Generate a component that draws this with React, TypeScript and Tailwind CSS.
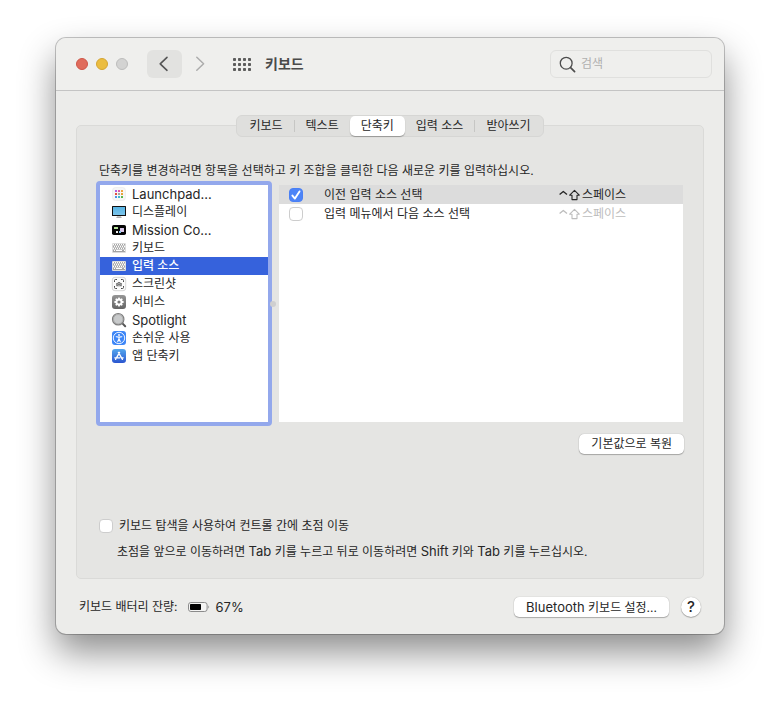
import { useState } from "react";
import type { ReactNode } from "react";

const KOREAN = "font-['Inter','Noto_Sans_CJK_KR',sans-serif]";

function LaunchpadIcon() {
  const colors = ["#b05be0", "#e0569c", "#f0a23c", "#e04a3c", "#9aa4ae", "#e5a037", "#4a8fe8", "#39b9c8", "#58b548"];
  return (
    <svg width="16" height="16" viewBox="0 0 16 16" aria-hidden="true">
      <rect x="1.5" y="1.5" width="13" height="13" rx="3" fill="#f6f6f6" stroke="#e9e9e9" strokeWidth=".6" />
      {colors.map((c, i) => (
        <rect key={c} x={4 + (i % 3) * 3} y={4 + Math.floor(i / 3) * 3} width="2" height="2" rx=".3" fill={c} />
      ))}
    </svg>
  );
}

function DisplayIcon() {
  return (
    <svg width="16" height="16" viewBox="0 0 16 16" aria-hidden="true">
      <defs>
        <linearGradient id="screen" x1="0" y1="0" x2="0" y2="1">
          <stop offset="0" stopColor="#58b4e4" />
          <stop offset="1" stopColor="#7cc4ea" />
        </linearGradient>
      </defs>
      <path d="M6 12h4l.5 2h-5z" fill="#c9c9c9" />
      <rect x="5.5" y="13.2" width="5" height=".8" fill="#a9a9a9" />
      <rect x="1" y="2" width="14" height="10" rx=".5" fill="#111" />
      <rect x="2" y="3" width="12" height="8" fill="url(#screen)" />
    </svg>
  );
}

function MissionIcon() {
  return (
    <svg width="16" height="16" viewBox="0 0 16 16" aria-hidden="true">
      <rect x="1" y="3" width="14" height="10" rx="1.8" fill="#050505" />
      <rect x="3" y="5" width="4" height="2" rx=".3" fill="#b7e39a" />
      <rect x="9" y="6" width="4" height="4" rx=".3" fill="#d8c8ea" />
      <rect x="5" y="9" width="2" height="2" rx=".3" fill="#f0f0f0" />
      <rect x="8" y="9" width="2" height="2" rx=".3" fill="#8fc7ee" />
    </svg>
  );
}

function KeyboardIcon() {
  const keys: ReactNode[] = [];
  for (let r = 0; r < 4; r++) {
    for (let c = 0; c < 6; c++) {
      if (r === 3 && c > 0 && c < 5) continue;
      keys.push(<rect key={`${r}-${c}`} x={2 + c * 2 + (r % 2)} y={4 + r * 2} width="1" height="1" fill="#fff" />);
    }
  }
  return (
    <svg width="16" height="16" viewBox="0 0 16 16" aria-hidden="true">
      <rect x="1" y="3" width="14" height="10" rx="1" fill="#dcdcdc" />
      <rect x="2" y="4" width="12" height="8" fill="#a4a4a4" />
      {keys}
      <rect x="5" y="10" width="6" height="1" fill="#fff" />
      <path d="M2 5.5h12M2 7.5h12M2 9.5h12" stroke="#c9c9c9" strokeWidth="1" />
    </svg>
  );
}

function ScreenshotIcon() {
  return (
    <svg width="16" height="16" viewBox="0 0 16 16" aria-hidden="true">
      <rect x="1.3" y="1.3" width="13.4" height="13.4" rx="2.6" fill="#fbfbfb" stroke="#c6c6c6" strokeWidth=".7" />
      <path d="M3.5 6V4.5a1 1 0 0 1 1-1H6M10 3.5h1.5a1 1 0 0 1 1 1V6M12.5 10v1.5a1 1 0 0 1-1 1H10M6 12.5H4.5a1 1 0 0 1-1-1V10" fill="none" stroke="#4a4a4a" strokeWidth="1" />
      <path d="M5.2 6.9h1.3l.6-.9h1.8l.6.9h1.3v3.4H5.2z" fill="#777" />
      <circle cx="8" cy="8.5" r="1.1" fill="#555" stroke="#d6d6d6" strokeWidth=".6" />
    </svg>
  );
}

function ServicesIcon() {
  return (
    <svg width="16" height="16" viewBox="0 0 16 16" aria-hidden="true">
      <defs>
        <linearGradient id="gear" x1="0" y1="0" x2="0" y2="1">
          <stop offset="0" stopColor="#969696" />
          <stop offset="1" stopColor="#646464" />
        </linearGradient>
      </defs>
      <rect x="1" y="1" width="14" height="14" rx="3" fill="url(#gear)" />
      {[0, 45, 90, 135].map((a) => (
        <rect key={a} x="7.1" y="3.4" width="1.8" height="9.2" rx=".5" fill="#fff" transform={`rotate(${a} 8 8)`} />
      ))}
      <circle cx="8" cy="8" r="3.5" fill="#fff" />
      <circle cx="8" cy="8" r="1.6" fill="#777" />
    </svg>
  );
}

function SpotlightIcon() {
  return (
    <svg width="16" height="16" viewBox="0 0 16 16" aria-hidden="true">
      <path d="m11.4 11.4 2.8 2.8" stroke="#555" strokeWidth="2" strokeLinecap="round" />
      <circle cx="7.2" cy="7.2" r="5.7" fill="#c8cacb" stroke="#7d7d7d" strokeWidth="1.2" />
      <circle cx="7.2" cy="7.2" r="4.7" fill="none" stroke="#a2a2a2" strokeWidth=".7" />
    </svg>
  );
}

function AccessibilityIcon() {
  return (
    <svg width="16" height="16" viewBox="0 0 16 16" aria-hidden="true">
      <rect x="1" y="1" width="14" height="14" rx="3" fill="#3d86f7" />
      <circle cx="8" cy="8" r="5.7" fill="none" stroke="#fff" strokeWidth=".9" />
      <circle cx="8" cy="5" r=".9" fill="#fff" />
      <path d="M5.2 6.7 8 7.1l2.8-.4M8 7.1v1.8M8 8.8l-1.3 3M8 8.8l1.3 3" fill="none" stroke="#fff" strokeWidth="1.1" strokeLinecap="round" strokeLinejoin="round" />
    </svg>
  );
}

function AppStoreIcon() {
  return (
    <svg width="16" height="16" viewBox="0 0 16 16" aria-hidden="true">
      <defs>
        <linearGradient id="store" x1="0" y1="0" x2="0" y2="1">
          <stop offset="0" stopColor="#53a7ee" />
          <stop offset="1" stopColor="#2b55cf" />
        </linearGradient>
      </defs>
      <rect x="1" y="1" width="14" height="14" rx="3" fill="url(#store)" />
      <g stroke="#fff" strokeWidth="1.3" strokeLinecap="round">
        <path d="M8.6 4.4 5.6 9.6M7.4 4.4l4 7M3.8 9.8h5M10.8 9.8h1.4M4.6 11.4l.3-.5" />
      </g>
    </svg>
  );
}

type Category = { label: string; icon: ReactNode; latin?: boolean };

const categories: Category[] = [
  { label: "Launchpad...", icon: <LaunchpadIcon />, latin: true },
  { label: "디스플레이", icon: <DisplayIcon /> },
  { label: "Mission Co...", icon: <MissionIcon />, latin: true },
  { label: "키보드", icon: <KeyboardIcon /> },
  { label: "입력 소스", icon: <KeyboardIcon /> },
  { label: "스크린샷", icon: <ScreenshotIcon /> },
  { label: "서비스", icon: <ServicesIcon /> },
  { label: "Spotlight", icon: <SpotlightIcon />, latin: true },
  { label: "손쉬운 사용", icon: <AccessibilityIcon /> },
  { label: "앱 단축키", icon: <AppStoreIcon /> },
];

const tabs = ["키보드", "텍스트", "단축키", "입력 소스", "받아쓰기"];

function Toolbar() {
  return (
    <header className="flex h-[53px] items-center border-b border-[#c4c4c4] bg-[#efefed] pr-3 pl-5">
      <div className="flex gap-2">
        <button aria-label="닫기" className="size-3 rounded-full border border-[#cf5648] bg-[#e06c5c]" />
        <button aria-label="최소화" className="size-3 rounded-full border border-[#d5a532] bg-[#ebbd40]" />
        <button aria-label="확대" className="size-3 rounded-full border border-[#bdbdbc] bg-[#d3d3d2]" />
      </div>
      <button aria-label="뒤로" className="ml-[19px] flex h-7 w-[35px] items-center justify-center rounded-md bg-[#e2e2e0]">
        <svg width="12" height="16" viewBox="0 0 12 16" fill="none" stroke="#555" strokeWidth="1.6" strokeLinecap="round" strokeLinejoin="round" aria-hidden="true">
          <path d="M8 1.3 1.2 7.8 8 14.3" />
        </svg>
      </button>
      <button aria-label="앞으로" className="ml-[13px] flex h-7 w-[10px] items-center justify-center">
        <svg width="10" height="16" viewBox="0 0 10 16" fill="none" stroke="#acacac" strokeWidth="1.5" strokeLinecap="round" strokeLinejoin="round" aria-hidden="true">
          <path d="m1.8 1.3 6.8 6.5-6.8 6.5" />
        </svg>
      </button>
      <button aria-label="모두 보기" className="ml-[28px]">
        <svg width="18" height="13" viewBox="0 0 18 13" fill="#5c5c5c" aria-hidden="true">
          {[0, 5, 10].map((y) => [0, 5, 10, 15].map((x) => <rect key={`${x}-${y}`} x={x} y={y} width="3" height="3" rx=".8" />))}
        </svg>
      </button>
      <h1 className="ml-[14px] text-[14px] leading-5 font-bold text-[#4a4a4a]">키보드</h1>
      <label className="ml-auto flex h-7 w-[162px] items-center gap-[5px] rounded-md border border-[#e0e0de] pl-2">
        <svg className="shrink-0" width="17" height="17" viewBox="0 0 17 17" fill="none" stroke="#4d4d4d" strokeLinecap="round" aria-hidden="true">
          <circle cx="7.2" cy="7.2" r="5.9" strokeWidth="1.3" />
          <path d="m11.6 11.6 4 4" strokeWidth="1.7" />
        </svg>
        <input aria-label="검색" placeholder="검색" className="w-full min-w-0 bg-transparent text-[12px] leading-4 outline-none placeholder:text-[#b0b0af]" />
      </label>
    </header>
  );
}

function Tabs() {
  return (
    <div role="tablist" className="relative z-10 mx-auto flex h-[22px] w-fit items-center rounded-md border border-[#d6d6d4] bg-[#dfdfdd] px-px">
      {tabs.map((t, i) => {
        const active = t === "단축키";
        const divider = i === 1 || i === 4;
        return (
          <div key={t} className="flex items-center">
            <span className={divider ? "h-3 w-px bg-[#c6c6c4]" : "w-0"} />
            <button
              role="tab"
              aria-selected={active}
              className={
                active
                  ? "h-5 rounded-[5px] bg-white px-[11px] leading-4 shadow-[0_1px_1px_rgba(0,0,0,0.3)]"
                  : "h-5 px-[11px] leading-4"
              }
            >
              {t}
            </button>
          </div>
        );
      })}
    </div>
  );
}

function Tick({ id, checked, onChange }: { id: string; checked: boolean; onChange: () => void }) {
  return (
    <span className="grid size-[14px] shrink-0">
      <input
        id={id}
        type="checkbox"
        checked={checked}
        onChange={onChange}
        className="col-start-1 row-start-1 size-[14px] appearance-none rounded-[4px] border border-[#cdcdcd] bg-white checked:border-[#4a80f5] checked:bg-[#4d84f7]"
      />
      {checked && (
        <svg className="pointer-events-none col-start-1 row-start-1" width="14" height="14" viewBox="0 0 14 14" fill="none" stroke="#fff" strokeWidth="1.9" strokeLinecap="round" strokeLinejoin="round" aria-hidden="true">
          <path d="m3.4 7.6 2.5 3 4.6-7.2" />
        </svg>
      )}
    </span>
  );
}

function Shortcut() {
  return (
    <span className="flex items-center gap-px">
      <svg width="22" height="14" viewBox="0 0 22 14" fill="none" stroke="currentColor" strokeLinejoin="round" role="img" aria-label="Control Shift">
        <path d="M.6 6.6 4.3 3.4 8 6.6" strokeWidth="1.3" />
        <path d="m15.5 2.4 4.8 4.8h-2.3v4.4h-5V7.2h-2.3z" strokeWidth="1.1" />
      </svg>
      <span>스페이스</span>
    </span>
  );
}

function Latin({ children }: { children: ReactNode }) {
  return <span className="text-[13px]">{children}</span>;
}

const pushButton = "h-5 rounded-[5px] bg-white px-3 leading-4 shadow-[0_0_1px_rgba(0,0,0,0.35),0_1px_1px_rgba(0,0,0,0.25)]";

export default function App() {
  const [selected, setSelected] = useState("입력 소스");
  const [previous, setPrevious] = useState(true);
  const [next, setNext] = useState(false);
  const [navigation, setNavigation] = useState(false);

  return (
    <div className={`min-h-screen bg-white px-[56px] pt-[38px] pb-[74px] text-[12px] leading-4 text-[#262626] ${KOREAN}`}>
      <main className="overflow-hidden rounded-[10px] bg-[#ececea] shadow-[0_0_0_1px_rgba(0,0,0,0.22),0_18px_36px_rgba(0,0,0,0.45)]">
        <Toolbar />
        <div className="px-5 pt-6 pb-[17px]">
          <Tabs />
          <section className="-mt-3 rounded-[5px] border border-[#dadad8] bg-[#e5e5e3] px-[19px] pt-[37px] pb-[18px]">
            <p className="pl-[3px]">단축키를 변경하려면 항목을 선택하고 키 조합을 클릭한 다음 새로운 키를 입력하십시오.</p>
            <div className="mt-[2px] flex">
              <div role="listbox" aria-label="단축키 항목" className="h-[245px] w-[176px] shrink-0 rounded-[4px] border-4 border-[#93a8ec] bg-white">
                {categories.map((c) => {
                  const on = c.label === selected;
                  return (
                    <button
                      key={c.label}
                      role="option"
                      aria-selected={on}
                      onClick={() => setSelected(c.label)}
                      className={`flex h-[18px] w-full items-center gap-[5px] pl-[11px] text-left ${on ? "bg-[#3662dc] font-medium text-white" : ""} ${c.latin ? "text-[13px] leading-4" : ""}`}
                    >
                      {c.icon}
                      <span>{c.label}</span>
                    </button>
                  );
                })}
              </div>
              <div className="flex w-[7px] shrink-0 items-center">
                <span className="-ml-[2px] size-[6px] rounded-full bg-[#cfcfd0]" />
              </div>
              <div className="my-1 mr-px min-w-0 flex-1 bg-white">
                <table className="w-full table-fixed border-collapse">
                  <colgroup>
                    <col className="w-[45px]" />
                    <col />
                    <col className="w-[124px]" />
                  </colgroup>
                  <tbody>
                    <tr className="h-[19px] bg-[#dcdcdc]">
                      <td className="p-0 pl-[10px]"><Tick id="previous" checked={previous} onChange={() => setPrevious(!previous)} /></td>
                      <td className="p-0"><label htmlFor="previous">이전 입력 소스 선택</label></td>
                      <td className="p-0"><Shortcut /></td>
                    </tr>
                    <tr className="h-[19px]">
                      <td className="p-0 pl-[10px]"><Tick id="next" checked={next} onChange={() => setNext(!next)} /></td>
                      <td className="p-0"><label htmlFor="next">입력 메뉴에서 다음 소스 선택</label></td>
                      <td className="p-0 text-[#bdbdbd]"><Shortcut /></td>
                    </tr>
                  </tbody>
                </table>
              </div>
            </div>
            <div className="mt-2 flex justify-end">
              <button className={pushButton}>기본값으로 복원</button>
            </div>
            <div className="mt-16 flex items-center gap-[6px] pl-[3px]">
              <Tick id="navigation" checked={navigation} onChange={() => setNavigation(!navigation)} />
              <label htmlFor="navigation">키보드 탐색을 사용하여 컨트롤 간에 초점 이동</label>
            </div>
            <p className="mt-[9px] pl-[21px]">
              초점을 앞으로 이동하려면 <Latin>Tab</Latin> 키를 누르고 뒤로 이동하려면 <Latin>Shift</Latin> 키와 <Latin>Tab</Latin> 키를 누르십시오.
            </p>
          </section>
          <footer className="mt-[18px] flex items-center px-[3px]">
            <span>키보드 배터리 잔량:</span>
            <svg className="ml-[10px]" width="22" height="10" viewBox="0 0 22 10" aria-hidden="true">
              <rect x=".5" y=".5" width="18.6" height="9" rx="2.4" fill="#f4f4f3" stroke="#8b8b8b" />
              <rect x="2" y="2" width="11" height="6" rx=".8" fill="#000" />
              <path d="M20.4 3.4c1 .4 1 2.8 0 3.2z" fill="#8b8b8b" />
            </svg>
            <span className="ml-[6px] text-[13px] leading-4">67%</span>
            <button className={`ml-auto ${pushButton}`}><Latin>Bluetooth</Latin> 키보드 설정...</button>
            <button aria-label="도움말" className="ml-3 size-5 rounded-full bg-white text-[15px] leading-5 font-medium shadow-[0_0_1px_rgba(0,0,0,0.35),0_1px_1px_rgba(0,0,0,0.25)]">?</button>
          </footer>
        </div>
      </main>
    </div>
  );
}
